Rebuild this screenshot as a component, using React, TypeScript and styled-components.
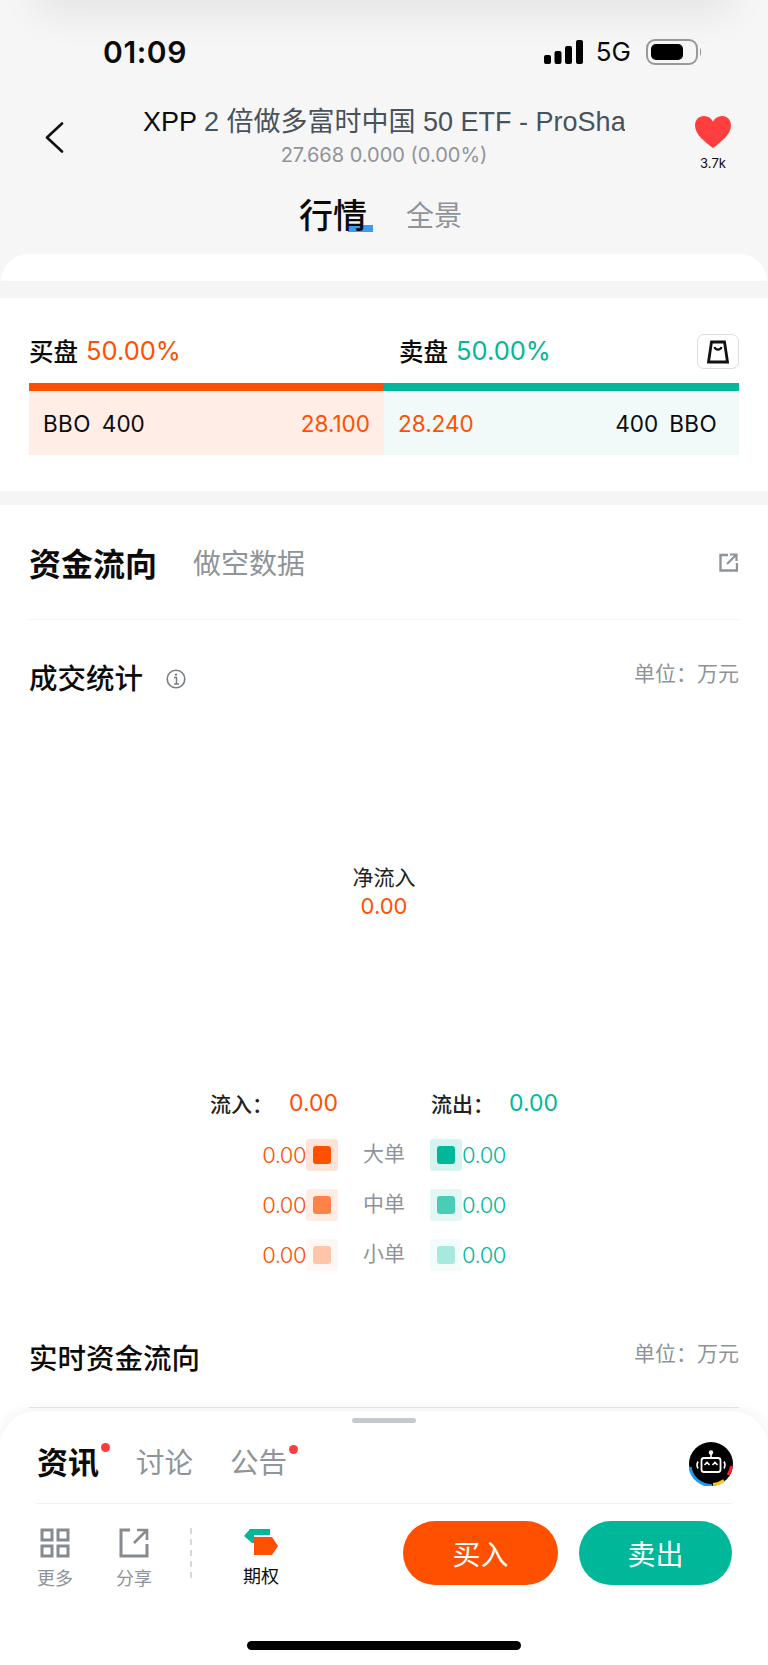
import React from 'react';
import styled, { createGlobalStyle } from 'styled-components';

const SANS = `Inter, "Noto Sans CJK SC", "Liberation Sans", sans-serif`;
const ORANGE = '#ff5000';
const GREEN = '#00b899';
const GREY = '#8e9499';

const GlobalStyle = createGlobalStyle`
  html, body {
    margin: 0;
    padding: 0;
    background: #fff;
    font-family: ${SANS};
  }
`;

const Page = styled.div`
  position: relative;
  width: 768px;
  height: 1665px;
  overflow: hidden;
  background: #fff;
  color: #0b0b0b;
`;

const Header = styled.header`
  position: relative;
  height: 281px;
  background: #f6f6f6;
  overflow: hidden;
  &::before {
    content: '';
    position: absolute;
    left: 50px;
    right: 50px;
    top: -30px;
    height: 30px;
    box-shadow: 0 0 40px 12px rgba(0, 0, 0, 0.08);
  }
`;

const StatusBar = styled.div`
  height: 104px;
  display: flex;
  align-items: center;
  justify-content: space-between;
  padding: 0 66px 0 103px;
`;

const Time = styled.span`
  font-size: 30px;
  font-weight: 600;
  letter-spacing: 0.6px;
`;

const StatusIcons = styled.div`
  display: flex;
  align-items: center;
  gap: 13px;
`;

const Network = styled.span`
  font-size: 26px;
  font-weight: 400;
  line-height: 26px;
  margin-right: 2px;
`;

const Nav = styled.div`
  height: 84px;
  display: flex;
  align-items: flex-start;
`;

const BackSlot = styled.div`
  width: 143px;
  padding: 18px 0 0 45px;
  box-sizing: border-box;
  svg {
    display: block;
  }
`;

const TitleBlock = styled.div`
  width: 482px;
  text-align: center;
`;

const Title = styled.div`
  height: 36px;
  line-height: 36px;
  font-family: "Liberation Sans", "Noto Sans CJK SC", sans-serif;
  font-size: 27px;
  white-space: nowrap;
  overflow: hidden;
  text-align: left;
  color: #48525c;
`;

const Ticker = styled.span`
  color: #0b0b0b;
`;

const Quote = styled.div`
  height: 30px;
  line-height: 30px;
  font-size: 20px;
  color: ${GREY};
`;

const Fav = styled.div`
  margin-left: 70px;
  width: 36px;
  padding-top: 12px;
  display: flex;
  flex-direction: column;
  align-items: center;
  svg {
    display: block;
  }
`;

const FavCount = styled.span`
  margin-top: 7px;
  font-size: 13px;
  line-height: 16px;
  white-space: nowrap;
`;

const ViewTabs = styled.div`
  position: relative;
  z-index: 0;
  height: 66px;
  display: flex;
  align-items: center;
  padding: 0 0 11px 299px;
  box-sizing: border-box;
  gap: 39px;
`;

const ViewTab = styled.span<{ $active?: boolean }>`
  position: relative;
  line-height: 50px;
  font-size: ${(p) => (p.$active ? '34px' : '28px')};
  font-weight: ${(p) => (p.$active ? 500 : 400)};
  color: ${(p) => (p.$active ? '#0b0b0b' : GREY)};
  ${(p) =>
    p.$active &&
    `&::after {
      content: '';
      position: absolute;
      left: 49px;
      top: 34px;
      width: 25px;
      height: 7px;
      background: #3a9bf5;
      z-index: -1;
    }`}
`;

const PanelTop = styled.div`
  height: 27px;
  margin: 0 1px;
  background: #fff;
  border-radius: 32px 32px 0 0;
`;

const Gap = styled.div<{ $h: number }>`
  height: ${(p) => p.$h}px;
  background: #f5f5f5;
`;

const OrderCard = styled.section`
  height: 193px;
  box-sizing: border-box;
  padding: 36px 29px 0;
`;

const SideRow = styled.div`
  display: grid;
  grid-template-columns: 370px 1fr 42px;
  align-items: center;
  height: 35px;
  margin-bottom: 14px;
`;

const SideLabel = styled.div`
  display: flex;
  align-items: center;
  gap: 8px;
  margin-top: -2px;
  font-size: 24.5px;
  font-weight: 500;
`;

const Percent = styled.span<{ $color: string }>`
  color: ${(p) => p.$color};
  font-size: 25.5px;
  font-weight: 400;
`;

const BagButton = styled.div`
  width: 42px;
  height: 35px;
  box-sizing: border-box;
  display: flex;
  align-items: center;
  justify-content: center;
  border: 1px solid #dedede;
  border-radius: 7px;
`;

const Book = styled.div`
  display: grid;
  grid-template-columns: 355px 355px;
`;

const BookSide = styled.div<{ $bar: string; $bg: string }>`
  height: 72px;
  box-sizing: border-box;
  border-top: 8px solid ${(p) => p.$bar};
  background: ${(p) => p.$bg};
  display: flex;
  align-items: center;
  justify-content: space-between;
  padding: 0 22px 0 14px;
  font-size: 22.5px;
  &:first-child {
    padding: 0 14px;
  }
`;

const BookGroup = styled.span`
  display: flex;
  gap: 11px;
`;

const Venue = styled.span`
  letter-spacing: 0.4px;
`;

const BookPrice = styled.span`
  color: ${ORANGE};
`;

const Section = styled.section`
  padding: 0 29px;
`;

const DataTabs = styled.div`
  height: 115px;
  box-sizing: border-box;
  display: flex;
  align-items: center;
  gap: 36px;
  padding-bottom: 1px;
  border-bottom: 1px solid #f3f3f3;
  svg {
    margin: 2px 1px 0 auto;
  }
`;

const DataTab = styled.span<{ $active?: boolean }>`
  font-size: ${(p) => (p.$active ? '32px' : '28px')};
  font-weight: ${(p) => (p.$active ? 700 : 400)};
  color: ${(p) => (p.$active ? '#0b0b0b' : GREY)};
`;

const SectionHead = styled.div<{ $h: number }>`
  height: ${(p) => p.$h}px;
  display: flex;
  justify-content: space-between;
  align-items: center;
`;

const SectionTitle = styled.div`
  display: flex;
  align-items: center;
  gap: 23px;
  font-size: 28.5px;
  font-weight: 500;
  line-height: 40px;
`;

const Unit = styled.span`
  font-size: 21px;
  color: ${GREY};
  margin-top: -14px;
`;

const Donut = styled.div`
  height: 347px;
  box-sizing: border-box;
  padding-top: 125px;
  text-align: center;
`;

const NetLabel = styled.div`
  font-size: 21px;
  line-height: 30px;
  color: #222;
`;

const NetValue = styled.div`
  font-size: 22px;
  line-height: 26px;
  color: ${ORANGE};
`;

const Totals = styled.div`
  display: grid;
  grid-template-columns: 79px 142px 78px 1fr;
  padding-left: 181px;
  height: 36px;
  align-items: center;
  margin-bottom: 9px;
`;

const TotalLabel = styled.span`
  font-size: 21px;
  font-weight: 500;
  color: #222;
  white-space: nowrap;
`;

const TotalValue = styled.span<{ $color: string }>`
  font-size: 23px;
  color: ${(p) => p.$color};
`;

const FlowRow = styled.div`
  height: 50px;
  display: grid;
  grid-template-columns: 277px 32px 92px 32px 1fr;
  align-items: center;
`;

const FlowValue = styled.span<{ $color: string; $right?: boolean }>`
  font-size: 22px;
  font-weight: 300;
  letter-spacing: -0.5px;
  color: ${(p) => p.$color};
  text-align: ${(p) => (p.$right ? 'right' : 'left')};
`;

const Swatch = styled.div<{ $rgb: string; $alpha: number }>`
  width: 32px;
  height: 32px;
  border-radius: 3px;
  background: rgba(${(p) => p.$rgb}, ${(p) => p.$alpha * 0.16});
  display: flex;
  align-items: center;
  justify-content: center;
  &::after {
    content: '';
    width: 18px;
    height: 18px;
    border-radius: 3px;
    background: rgba(${(p) => p.$rgb}, ${(p) => p.$alpha});
  }
`;

const FlowLabel = styled.span`
  font-size: 21px;
  line-height: 30px;
  margin-top: -2px;
  color: ${GREY};
  text-align: center;
`;

const RealtimeHead = styled(SectionHead)`
  margin-top: 59px;
  padding-bottom: 28px;
  border-bottom: 1px solid #e8e8e8;
  box-sizing: content-box;
`;

const Sheet = styled.div`
  position: absolute;
  left: 0;
  right: 0;
  bottom: 0;
  height: 254px;
  background: #fff;
  border-radius: 36px 36px 0 0;
  box-shadow: 0 -2px 14px rgba(0, 0, 0, 0.06);
  padding: 0 36px;
  box-sizing: border-box;
  display: flex;
  flex-direction: column;
`;

const Handle = styled.div`
  width: 64px;
  height: 5px;
  margin: 7px auto 0;
  border-radius: 3px;
  background: #c5c9cc;
`;

const SheetTabs = styled.div`
  height: 81px;
  box-sizing: border-box;
  display: flex;
  align-items: center;
  gap: 37px;
  border-bottom: 1px solid #f1f1f1;
  padding: 0 0 6px 1px;
  svg {
    margin: 8px -1px 0 auto;
  }
`;

const SheetTab = styled.span<{ $active?: boolean; $dot?: boolean }>`
  position: relative;
  font-size: ${(p) => (p.$active ? '31px' : '28.5px')};
  font-weight: ${(p) => (p.$active ? 700 : 400)};
  color: ${(p) => (p.$active ? '#0b0b0b' : GREY)};
  ${(p) =>
    p.$dot &&
    `&::after {
      content: '';
      position: absolute;
      right: -11px;
      top: 5px;
      width: 9px;
      height: 9px;
      border-radius: 50%;
      background: #ff3b3b;
    }`}
`;

const ActionRow = styled.div`
  height: 82px;
  margin-top: 17px;
  padding-left: 1px;
  display: flex;
  align-items: flex-start;
`;

const Tool = styled.div<{ $dark?: boolean }>`
  width: 36px;
  margin-right: 43px;
  display: flex;
  flex-direction: column;
  align-items: center;
  font-size: 18px;
  line-height: 24px;
  color: ${(p) => (p.$dark ? '#0b0b0b' : GREY)};
  white-space: nowrap;
  svg {
    display: block;
    margin: 7px 0 9px;
  }
`;

const Dash = styled.div`
  width: 0;
  height: 50px;
  margin: 7px 51px 0 -5px;
  border-left: 2px dashed #d8d8d8;
`;

const Buttons = styled.div`
  margin-left: auto;
  display: flex;
  gap: 21px;
`;

const TradeButton = styled.div<{ $bg: string }>`
  width: 153px;
  height: 64px;
  border-radius: 32px;
  background: ${(p) => p.$bg};
  color: #fff;
  font-size: 28px;
  display: flex;
  align-items: center;
  justify-content: center;
  &:first-child {
    width: 155px;
  }
`;

const HomeBar = styled.div`
  width: 274px;
  height: 9px;
  margin: 38px auto 0;
  border-radius: 5px;
  background: #000;
`;

const flows: { label: string; alpha: number }[] = [
  { label: '大单', alpha: 1 },
  { label: '中单', alpha: 0.68 },
  { label: '小单', alpha: 0.3 },
];

const UNIT_TEXT = '单位\uFF1A万元';

const App: React.FC = () => (
  <Page>
    <GlobalStyle />
    <Header>
      <StatusBar>
        <Time>01:09</Time>
        <StatusIcons>
          <svg width="39" height="24" viewBox="0 0 39 24">
            <rect x="0" y="15" width="7" height="9" rx="2" fill="#000" />
            <rect x="10.5" y="11" width="7" height="13" rx="2" fill="#000" />
            <rect x="21" y="6" width="7" height="18" rx="2" fill="#000" />
            <rect x="32" y="0" width="7" height="24" rx="2" fill="#000" />
          </svg>
          <Network>5G</Network>
          <svg width="56" height="26" viewBox="0 0 56 26">
            <rect x="1" y="1" width="50" height="24" rx="8" fill="none" stroke="#999" strokeWidth="2" />
            <rect x="5" y="5" width="32" height="16" rx="5" fill="#000" />
            <path d="M54 9c1.5 1 1.5 7 0 8z" fill="#999" />
          </svg>
        </StatusIcons>
      </StatusBar>
      <Nav>
        <BackSlot>
          <svg width="19" height="31" viewBox="0 0 19 31">
            <path d="M17 1.5 2 15.5l15 14" fill="none" stroke="#111" strokeWidth="2.6" strokeLinecap="round" strokeLinejoin="round" />
          </svg>
        </BackSlot>
        <TitleBlock>
          <Title>
            <Ticker>XPP</Ticker> 2 倍做多富时中国 50 ETF - ProShares Ultra FTSE China 50
          </Title>
          <Quote>27.668 0.000 (0.00%)</Quote>
        </TitleBlock>
        <Fav>
          <svg width="36" height="32" viewBox="0 0 36 32">
            <path d="M18 32C10 26 0 18.500 0 9.500 0 3.800 4 0 9 0c4 0 7.200 2.200 9 5.500C19.800 2.200 23 0 27 0c5 0 9 3.800 9 9.500C36 18.500 26 26 18 32z" fill="#ff3f3f" />
          </svg>
          <FavCount>3.7k</FavCount>
        </Fav>
      </Nav>
      <ViewTabs>
        <ViewTab $active>行情</ViewTab>
        <ViewTab>全景</ViewTab>
      </ViewTabs>
      <PanelTop />
    </Header>
    <Gap $h={17} />
    <OrderCard>
      <SideRow>
        <SideLabel>
          买盘 <Percent $color={ORANGE}>50.00%</Percent>
        </SideLabel>
        <SideLabel>
          卖盘 <Percent $color={GREEN}>50.00%</Percent>
        </SideLabel>
        <BagButton>
          <svg width="22" height="24" viewBox="0 0 22 24">
            <path d="M4.500 2h13L20.500 22h-19z" fill="none" stroke="#111" strokeWidth="2.800" />
            <path d="M7.500 7c1 3.500 6 3.500 7 0" fill="none" stroke="#111" strokeWidth="2.200" />
          </svg>
        </BagButton>
      </SideRow>
      <Book>
        <BookSide $bar={ORANGE} $bg="#ffede6">
          <BookGroup>
            <Venue>BBO</Venue>
            <span>400</span>
          </BookGroup>
          <BookPrice>28.100</BookPrice>
        </BookSide>
        <BookSide $bar={GREEN} $bg="#f1faf8">
          <BookPrice>28.240</BookPrice>
          <BookGroup>
            <span>400</span>
            <Venue>BBO</Venue>
          </BookGroup>
        </BookSide>
      </Book>
    </OrderCard>
    <Gap $h={14} />
    <Section>
      <DataTabs>
        <DataTab $active>资金流向</DataTab>
        <DataTab>做空数据</DataTab>
        <svg width="19" height="19" viewBox="0 0 19 19">
          <path d="M9 2H1.500v15.500H18V10" fill="none" stroke={GREY} strokeWidth="2.400" />
          <path d="M8 11 17 2M11 1.500h6.500V8" fill="none" stroke={GREY} strokeWidth="2.200" />
        </svg>
      </DataTabs>
      <SectionHead $h={118}>
        <SectionTitle>
          成交统计
          <svg width="20" height="20" viewBox="0 0 20 20">
            <circle cx="10" cy="10" r="8.800" fill="none" stroke="#777d82" strokeWidth="1.600" />
            <path d="M8 8.500h2.500V15M8 15h5" fill="none" stroke="#777d82" strokeWidth="1.500" />
            <circle cx="10" cy="5.600" r="1.200" fill="#777d82" />
          </svg>
        </SectionTitle>
        <Unit>{UNIT_TEXT}</Unit>
      </SectionHead>
      <Donut>
        <NetLabel>净流入</NetLabel>
        <NetValue>0.00</NetValue>
      </Donut>
      <Totals>
        <TotalLabel>{'流入\uFF1A'}</TotalLabel>
        <TotalValue $color={ORANGE}>0.00</TotalValue>
        <TotalLabel>{'流出\uFF1A'}</TotalLabel>
        <TotalValue $color={GREEN}>0.00</TotalValue>
      </Totals>
      {flows.map((f) => (
        <FlowRow key={f.label}>
          <FlowValue $color={ORANGE} $right>
            0.00
          </FlowValue>
          <Swatch $rgb="255, 80, 0" $alpha={f.alpha} />
          <FlowLabel>{f.label}</FlowLabel>
          <Swatch $rgb="0, 184, 153" $alpha={f.alpha} />
          <FlowValue $color={GREEN}>0.00</FlowValue>
        </FlowRow>
      ))}
      <RealtimeHead $h={40}>
        <SectionTitle>实时资金流向</SectionTitle>
        <Unit>{UNIT_TEXT}</Unit>
      </RealtimeHead>
    </Section>
    <Sheet>
      <Handle />
      <SheetTabs>
        <SheetTab $active $dot>
          资讯
        </SheetTab>
        <SheetTab>讨论</SheetTab>
        <SheetTab $dot>公告</SheetTab>
        <svg width="44" height="44" viewBox="0 0 44 44">
          <circle cx="22" cy="22" r="22" fill="#000" />
          <path d="M1 25a21.500 21.500 0 0 0 22 18.500" fill="none" stroke="#1e9bf0" strokeWidth="3" />
          <path d="M24 42.500a21 21 0 0 0 11-4" fill="none" stroke="#f7c325" strokeWidth="3" />
          <path d="M39 33a21 21 0 0 0 3.500-9" fill="none" stroke="#f5222d" strokeWidth="3" />
          <circle cx="22" cy="10.500" r="2.200" fill="#fff" />
          <path d="M22 12v4" stroke="#fff" strokeWidth="1.600" />
          <rect x="12.500" y="16" width="19" height="14" rx="2.500" fill="none" stroke="#fff" strokeWidth="1.800" />
          <path d="M15.500 23l2.500-2.500 2.500 2.500M23.500 23l2.500-2.500 2.500 2.500" fill="none" stroke="#fff" strokeWidth="1.600" />
          <path d="M9 19.500c-1.200 2-1.200 5 0 7M35 19.500c1.200 2 1.200 5 0 7" fill="none" stroke="#fff" strokeWidth="1.500" />
        </svg>
      </SheetTabs>
      <ActionRow>
        <Tool>
          <svg width="30" height="30" viewBox="0 0 30 30">
            <g fill="none" stroke="#858b91" strokeWidth="3">
              <rect x="2" y="2" width="10" height="10" />
              <rect x="18" y="2" width="10" height="10" />
              <rect x="2" y="18" width="10" height="10" />
              <rect x="18" y="18" width="10" height="10" />
            </g>
          </svg>
          更多
        </Tool>
        <Tool>
          <svg width="30" height="30" viewBox="0 0 30 30">
            <path d="M11 2H2v26h26v-12" fill="none" stroke="#858b91" strokeWidth="3" />
            <path d="M15 15 27 3M18 2h10v10" fill="none" stroke="#858b91" strokeWidth="2.600" />
          </svg>
          分享
        </Tool>
        <Dash />
        <Tool $dark>
          <svg width="36" height="28" viewBox="0 0 36 28">
            <path d="M7 1h20v6H11v8h-2L1 8z" fill={GREEN} />
            <path d="M11 9h18l6 9-6 9H11z" fill={ORANGE} />
          </svg>
          期权
        </Tool>
        <Buttons>
          <TradeButton $bg={ORANGE}>买入</TradeButton>
          <TradeButton $bg={GREEN}>卖出</TradeButton>
        </Buttons>
      </ActionRow>
      <HomeBar />
    </Sheet>
  </Page>
);

export default App;
